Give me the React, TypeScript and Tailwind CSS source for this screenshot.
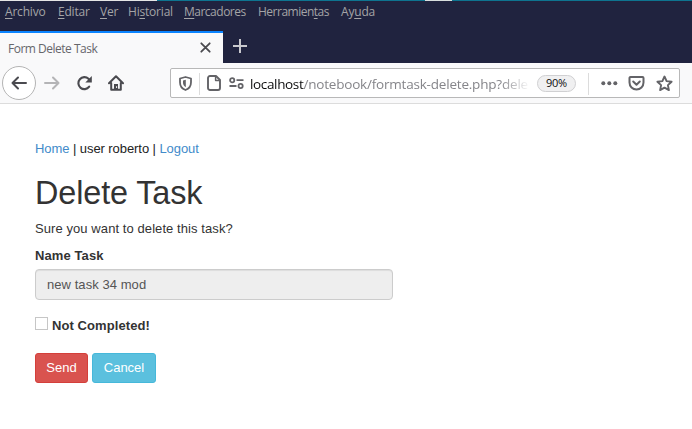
import React from "react";

const ui = "font-['Open_Sans','Noto_Sans',sans-serif]";

function Key({ children }: { children: string }) {
  return <span className="underline decoration-1 underline-offset-[2px]">{children}</span>;
}

function MenuBar() {
  return (
    <nav className="flex h-[20px] items-center pl-[5px] text-[12px] leading-[14px] tracking-[-0.2px] text-[#a4a4a6]">
      <span className="w-[53px]"><Key>A</Key>rchivo</span>
      <span className="w-[42px]"><Key>E</Key>ditar</span>
      <span className="w-[28px]"><Key>V</Key>er</span>
      <span className="w-[56px]">Hi<Key>s</Key>torial</span>
      <span className="w-[74px] tracking-[-0.5px]"><Key>M</Key>arcadores</span>
      <span className="w-[83px] tracking-[-0.5px]">Herramien<Key>t</Key>as</span>
      <span>Ay<Key>u</Key>da</span>
    </nav>
  );
}

function TabStrip() {
  return (
    <div className="mt-[9px] flex h-[32px]">
      <div className="flex w-[223px] items-center border-t-2 border-[#0a84ff] bg-[#f9f9fa] pl-[8px] text-[12px] tracking-[-0.5px] text-[#66666b]">
        <span className="w-[192px] pt-px">Form Delete Task</span>
        <svg className="mb-px" width="11" height="11" viewBox="0 0 11 11" stroke="#4a4a4f" strokeWidth="1.8" strokeLinecap="round">
          <path d="M1.3 1.3l8.4 8.4M9.7 1.3l-8.4 8.4" />
        </svg>
      </div>
      <svg className="mt-[8px] ml-[10px]" width="14" height="14" viewBox="0 0 14 14" stroke="#c9c9ce" strokeWidth="2">
        <path d="M7 0v14M0 7h14" />
      </svg>
    </div>
  );
}

function Toolbar() {
  return (
    <div className="flex h-[41px] border-b border-[#dcdcdc] bg-[#f9f9fa]">
      <div className="mt-[3px] ml-[2px] flex h-[34px] w-[34px] items-center justify-center rounded-full border border-[#b4b4b4] bg-white">
        <svg width="16" height="16" viewBox="0 0 16 16" fill="none" stroke="#4a4a4f" strokeWidth="2" strokeLinecap="round" strokeLinejoin="round">
          <path d="M15 8H1.5M7 2.5L1.5 8 7 13.5" />
        </svg>
      </div>
      <svg className="mt-[12px] ml-[8px]" width="16" height="16" viewBox="0 0 16 16" fill="none" stroke="#b4b4b6" strokeWidth="2" strokeLinecap="round" strokeLinejoin="round">
        <path d="M1 8h13.5M9 2.5L14.5 8 9 13.5" />
      </svg>
      <svg className="mt-[12px] ml-[16px]" width="17" height="16" viewBox="0 0 17 16" fill="none" stroke="#4a4a4f" strokeWidth="2.1" strokeLinecap="round">
        <path d="M13.2 11.7A6 6 0 1 1 12.5 3.8L14 5.4" />
        <path d="M15.8 1v6.5H9.3z" fill="#4a4a4f" stroke="none" />
      </svg>
      <svg className="mt-[12px] ml-[15px]" width="16" height="16" viewBox="0 0 16 16" fill="none" stroke="#4a4a4f" strokeWidth="2" strokeLinecap="round" strokeLinejoin="round">
        <path d="M1 8.3L8 1.2l7 7.1M3.2 8v6.8h9.6V8" />
        <path d="M6 15V9h4v6z" fill="#4a4a4f" stroke="none" />
        <path d="M8.6 11.6v1" stroke="#f9f9fa" strokeWidth="1" />
      </svg>
      <div className="mt-[5px] ml-[46px] flex h-[30px] w-[510px] rounded-[2px] border border-[#b8b8b8] bg-white">
        <svg className="mt-[7px] ml-[8px]" width="13" height="15" viewBox="0 0 13 15" fill="none" stroke="#636367" strokeWidth="1.8" strokeLinejoin="round">
          <path d="M6.5 1L12 2.5v3.7c0 4-2 6.5-5.5 7.8C3 12.7 1 10.2 1 6.2V2.5z" />
          <path d="M6.8 3.7L4 4.5v2c0 2.2.9 3.7 2.8 4.7z" fill="#636367" stroke="none" />
        </svg>
        <div className="mt-[4px] ml-[7px] h-[22px] w-px bg-[#dcdcdc]" />
        <svg className="mt-[6px] ml-[7px]" width="14" height="16" viewBox="0 0 14 16" fill="none" stroke="#636367" strokeWidth="1.9" strokeLinejoin="round">
          <path d="M3 1h6l4 4v8a2 2 0 0 1-2 2H3a2 2 0 0 1-2-2V3a2 2 0 0 1 2-2z" />
          <path d="M8.6 1v4.6H13" strokeWidth="1.5" />
        </svg>
        <svg className="mt-[8px] ml-[8px]" width="15" height="13" viewBox="0 0 15 13" fill="none" stroke="#636367" strokeWidth="1.8">
          <circle cx="3.2" cy="3.2" r="2.1" />
          <circle cx="11.6" cy="9" r="2.1" />
          <path d="M7.5 3.2h7M.5 9h7" />
        </svg>
        <div className="mt-[6px] ml-[6px] h-[19px] w-[280px] text-[13.5px] leading-[19px] tracking-[-0.2px] whitespace-nowrap text-[#85858a] [mask-image:linear-gradient(to_right,black_250px,transparent_280px)]">
          <span className="tracking-[-0.35px] text-[#0c0c0d]">localhost</span>/notebook/formtask-delete.php?dele
        </div>
        <div className="mt-[6px] ml-[7px] flex h-[17px] w-[39px] items-center justify-center rounded-full border border-[#d0d0d2] bg-[#f0f0f1] text-[11px] tracking-[-0.3px] text-[#0c0c0d]">90%</div>
        <div className="mt-[4px] ml-[12px] h-[22px] w-px bg-[#dcdcdc]" />
        <svg className="mt-[12px] ml-[12px]" width="17" height="5" viewBox="0 0 17 5" fill="#636367">
          <circle cx="2.3" cy="2.2" r="2" /><circle cx="8.3" cy="2.2" r="2" /><circle cx="14.3" cy="2.2" r="2" />
        </svg>
        <svg className="mt-[7px] ml-[10px]" width="17" height="15" viewBox="0 0 17 15" fill="none" stroke="#636367" strokeWidth="2" strokeLinecap="round" strokeLinejoin="round">
          <path d="M2.5 1h12a1 1 0 0 1 1 1v4.5a7 7 0 0 1-14 0V2a1 1 0 0 1 1-1z" />
          <path d="M5.2 5.5l3.3 3.2 3.3-3.2" />
        </svg>
        <svg className="mt-[6px] ml-[11px]" width="17" height="17" viewBox="0 0 17 17" fill="none" stroke="#636367" strokeWidth="1.9" strokeLinejoin="round">
          <path d="M8.5 1.5l2.1 4.6 5 .6-3.7 3.4 1 5-4.4-2.5-4.4 2.5 1-5-3.7-3.4 5-.6z" />
        </svg>
      </div>
    </div>
  );
}

export default function App() {
  return (
    <div className="h-[429px] w-[692px] overflow-hidden bg-white">
      <header className={ui}>
        <div className="flex h-px bg-[#0e7490]">
          <div className="w-[157px] bg-[#e6e6e6]" />
          <div className="ml-[268px] w-[27px] bg-[#d8dede]" />
        </div>
        <div className="h-[62px] bg-[#20233f] pt-px">
          <MenuBar />
          <TabStrip />
        </div>
        <Toolbar />
      </header>
      <main className="pl-[35px] font-['Liberation_Sans',Arial,sans-serif] text-[13px] leading-[18px] text-[#333]">
        <p className="pt-[36px] tracking-[-0.07px] text-[#222]">
          <a className="text-[#428bca]">Home</a> | user roberto | <a className="text-[#428bca]">Logout</a>
        </p>
        <h1 className="mt-[17px] text-[32.4px] leading-[36px] tracking-[-0.12px]">Delete Task</h1>
        <p className="mt-[9px] tracking-[0.08px]">Sure you want to delete this task?</p>
        <label className="mt-[9px] block font-bold tracking-[0.1px]">Name Task</label>
        <div className="mt-[4px] flex h-[31px] w-[358px] items-center rounded-[4px] border border-[#ccc] bg-[#eee] pl-[11px] tracking-[0.06px] text-[#555] shadow-[inset_0_1px_1px_rgba(0,0,0,0.075)]">new task 34 mod</div>
        <div className="mt-[17px] flex h-[18px]">
          <span className="h-[13px] w-[13px] border border-[#c6c6c6] bg-white" />
          <span className="ml-[4px] font-bold tracking-[0.08px]">Not Completed!</span>
        </div>
        <div className="mt-[18px] flex gap-[4px] text-white">
          <button className="h-[30px] w-[53px] rounded-[3px] border border-[#d43f3a] bg-[#d9534f]">Send</button>
          <button className="h-[30px] w-[64px] rounded-[3px] border border-[#46b8da] bg-[#5bc0de]">Cancel</button>
        </div>
      </main>
    </div>
  );
}
